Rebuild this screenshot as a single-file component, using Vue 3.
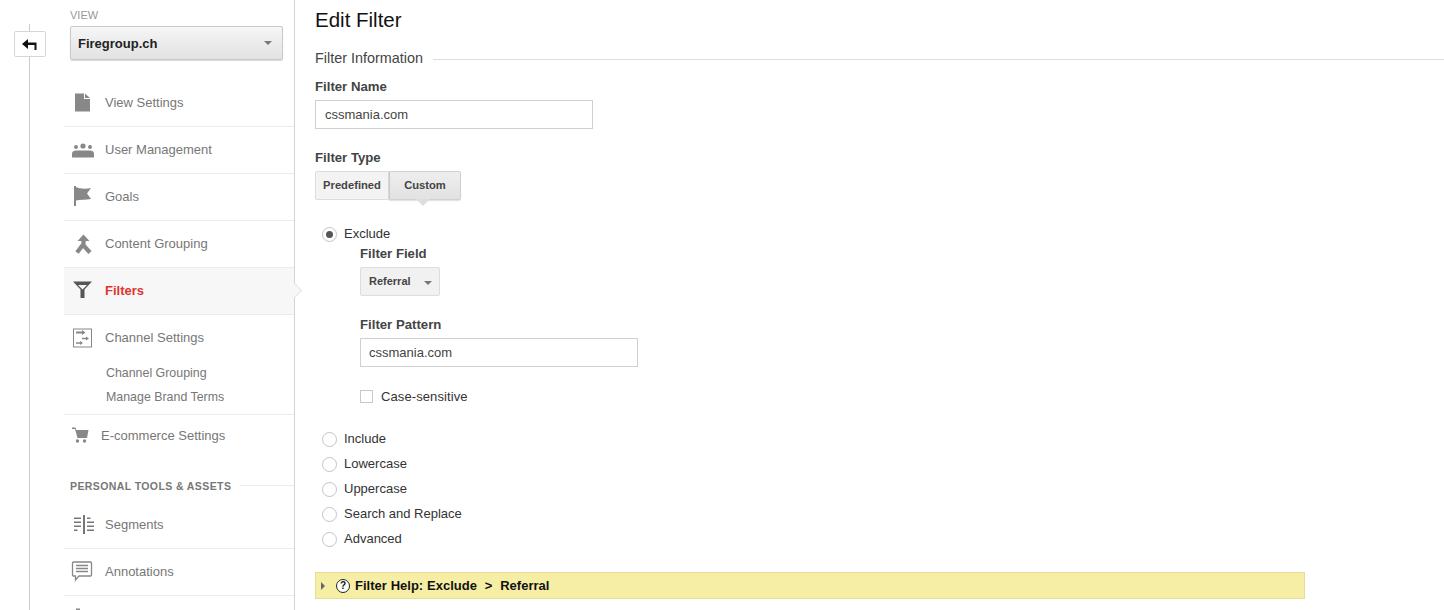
<script setup>
const radios = ['Include', 'Lowercase', 'Uppercase', 'Search and Replace', 'Advanced']
</script>

<template>
  <div class="page">
    <div class="rail">
      <button class="back" type="button" aria-label="Back">
        <svg width="16" height="12" viewBox="0 0 16 12"><path d="M0 6 6 1V4.600H14.500V12H12.500V7H6V11z" fill="#111"/></svg>
      </button>
    </div>

    <aside class="side">
      <div class="view-label">VIEW</div>
      <div class="view-select">
        <span>Firegroup.ch</span>
        <i class="caret"></i>
      </div>

      <nav class="nav">
        <a class="item">
          <svg class="ico" viewBox="0 0 30 24"><path d="M7 3.500h9v5.500h6v12.500H7zM17 3.500l5 4.500h-5z" fill="#888"/></svg>
          <span>View Settings</span>
        </a>
        <a class="item">
          <svg class="ico" viewBox="0 0 30 24" fill="#888"><circle cx="8" cy="10" r="2"/><circle cx="15" cy="9" r="2.600"/><circle cx="22" cy="10" r="2"/><path d="M4 20.500v-4c0-2 2-3 4-3h14c2 0 4 1 4 3v4z"/></svg>
          <span>User Management</span>
        </a>
        <a class="item">
          <svg class="ico" viewBox="0 0 30 24" fill="#888"><path d="M6 2h2v20H6zM8 3c3 1.500 9 2.500 15 1l-4 5.500 4 5.500c-5 1-11 .5-15 1.500z"/></svg>
          <span>Goals</span>
        </a>
        <a class="item">
          <svg class="ico" viewBox="0 0 30 24"><path d="M15.500 3.500 9.500 10h12z" fill="#888"/><path d="M15.500 9v4L9 21.500M16 15l6 6.500" fill="none" stroke="#888" stroke-width="4.200"/></svg>
          <span>Content Grouping</span>
        </a>
        <a class="item active">
          <svg class="ico" viewBox="0 0 30 24"><path d="M5 3.500h19l-7.500 8v8.500h-4v-8.500z" fill="#555"/><path d="M10 7h9l-4.500 4.500z" fill="#f7f7f7"/></svg>
          <span>Filters</span>
          <i class="pointer"></i>
        </a>
        <div class="group">
          <a class="item plain">
            <svg class="ico" viewBox="0 0 30 24"><rect x="5.500" y="3" width="18" height="18" fill="none" stroke="#888"/><path d="M8 5.500h6V4l3.500 2.500L14 9V7.500H8zM14 11.800h4v-1.300l3 2-3 2v-1.300h-4zM8 16.300h4V15l3 2-3 2v-1.300H8z" fill="#888"/></svg>
            <span>Channel Settings</span>
          </a>
          <a class="sub first">Channel Grouping</a>
          <a class="sub">Manage Brand Terms</a>
        </div>
        <a class="item shop">
          <svg class="ico tight" viewBox="0 0 30 24" fill="#888"><path d="M4 4.500h3.500l.8 2.500H20.500l-1.500 8H9.500L7 6H4z"/><circle cx="9.500" cy="18" r="1.700"/><circle cx="16.500" cy="18" r="1.700"/></svg>
          <span>E-commerce Settings</span>
        </a>
      </nav>

      <div class="section">
        <span>PERSONAL TOOLS &amp; ASSETS</span>
        <i></i>
      </div>

      <nav class="nav">
        <a class="item">
          <svg class="ico" viewBox="0 0 30 24" fill="#777"><path d="M15 3h2v19h-2zM6 5.500h7v1.500H6zM6 9.500h7v1.500H6zM6 13.500h7v1.500H6zM6 17.500h3.500v1.500H6zM19 5.500h3.500v1.500H19zM19 9.500h7v1.500h-7zM19 13.500h7v1.500h-7zM19 17.500h7v1.500h-7z"/></svg>
          <span>Segments</span>
        </a>
        <a class="item">
          <svg class="ico" viewBox="0 0 30 24"><path d="M5.500 3h17a1 1 0 0 1 1 1v12a1 1 0 0 1-1 1H11l-3.500 4v-4H5.500a1 1 0 0 1-1-1V4a1 1 0 0 1 1-1z" fill="#fff" stroke="#888" stroke-width="1.300"/><path d="M8 6.500h12M8 9.500h12M8 12.500h12" stroke="#888" stroke-width="1.400"/></svg>
          <span>Annotations</span>
        </a>
        <div class="item last">
          <svg class="ico" viewBox="0 0 30 24"><rect x="8" y="1.500" width="4" height="6" fill="#888"/></svg>
        </div>
      </nav>
    </aside>

    <main class="main">
      <h1>Edit Filter</h1>
      <div class="legend"><span>Filter Information</span><i></i></div>

      <label class="lbl name-lbl">Filter Name</label>
      <div class="input name-input">cssmania.com</div>

      <label class="lbl type-lbl">Filter Type</label>
      <div class="tabs">
        <div class="tab">Predefined</div>
        <div class="tab on">Custom</div>
      </div>

      <div class="options">
        <div class="radio-row">
          <span class="radio checked"></span>
          <span>Exclude</span>
        </div>
        <div class="nested">
          <label class="lbl">Filter Field</label>
          <div class="drop"><span>Referral</span><i class="caret"></i></div>
          <label class="lbl pattern-lbl">Filter Pattern</label>
          <div class="input pattern-input">cssmania.com</div>
          <div class="check-row">
            <span class="check"></span>
            <span>Case-sensitive</span>
          </div>
        </div>
        <div class="radio-list">
          <div v-for="r in radios" :key="r" class="radio-row">
            <span class="radio"></span>
            <span>{{ r }}</span>
          </div>
        </div>
      </div>

      <div class="help">
        <i class="tri"></i>
        <span class="q">?</span>
        <span>Filter Help: Exclude &nbsp;&gt;&nbsp; Referral</span>
      </div>
    </main>
  </div>
</template>

<style>
html, body { margin: 0; background: #fff; overflow: hidden; }
</style>

<style scoped>
.page {
  display: flex;
  width: 1444px;
  height: 610px;
  overflow: hidden;
  font-family: "Liberation Sans", Arial, sans-serif;
  font-size: 13px;
  color: #333;
  background: #fff;
}
.rail {
  position: relative;
  flex: 0 0 64px;
}
.rail::before {
  content: "";
  position: absolute;
  left: 29px;
  top: 24px;
  bottom: 0;
  width: 1px;
  background: #ccc;
}
.back {
  position: relative;
  display: flex;
  align-items: center;
  justify-content: center;
  box-sizing: border-box;
  width: 32px;
  height: 26px;
  margin: 31px 0 0 14px;
  padding: 0;
  background: #fff;
  border: 1px solid #d6d6d6;
  border-radius: 2px;
}
.side {
  flex: 0 0 231px;
  box-sizing: border-box;
  border-right: 1px solid #d4d4d4;
  height: 610px;
}
.view-label {
  padding: 9px 0 0 6px;
  height: 17px;
  font-size: 11px;
  line-height: 13px;
  color: #999;
}
.view-select {
  display: flex;
  align-items: center;
  justify-content: space-between;
  box-sizing: border-box;
  width: 213px;
  height: 34px;
  margin-left: 6px;
  padding: 0 10px 0 7px;
  border: 1px solid #c9c9c9;
  border-radius: 2px;
  background: linear-gradient(#f6f6f6, #e2e2e2);
  box-shadow: 0 1px 1px rgba(0,0,0,.15);
  font-size: 13px;
  font-weight: 700;
  color: #222;
}
.caret {
  width: 0;
  height: 0;
  border-left: 4px solid transparent;
  border-right: 4px solid transparent;
  border-top: 4px solid #777;
}
.nav:first-of-type { margin-top: 20px; }
.item {
  position: relative;
  display: flex;
  align-items: center;
  box-sizing: border-box;
  height: 47px;
  padding-bottom: 2px;
  border-bottom: 1px solid #ececec;
  color: #777;
  font-size: 13px;
}
.ico {
  flex: none;
  width: 30px;
  height: 24px;
  margin: 0 7px 0 4px;
}
.ico.tight { margin-right: 3px; }
.item.active {
  background: #f7f7f7;
  color: #e03530;
  font-weight: 700;
}
.pointer {
  position: absolute;
  right: -6px;
  top: 17px;
  box-sizing: border-box;
  width: 11px;
  height: 11px;
  background: #f7f7f7;
  border-top: 1px solid #e4e4e4;
  border-right: 1px solid #e4e4e4;
  transform: rotate(45deg);
}
.group {
  height: 100px;
  box-sizing: border-box;
  border-bottom: 1px solid #ececec;
}
.item.plain { border-bottom: 0; }
.sub {
  display: block;
  height: 24px;
  line-height: 24px;
  padding-left: 42px;
  font-size: 12.400px;
  color: #777;
}
.sub.first { margin-top: -1px; }
.item.shop {
  height: 42px;
  border-bottom: 0;
}
.section {
  display: flex;
  align-items: center;
  gap: 9px;
  margin-top: 12px;
  height: 33px;
  padding-left: 6px;
  font-size: 10.500px;
  font-weight: 700;
  letter-spacing: .4px;
  color: #777;
}
.section i {
  flex: 1;
  height: 1px;
  background: #ececec;
}
.section + .nav { margin-top: 0; }
.item.last { border: 0; }
.main {
  flex: 1;
  padding-left: 20px;
  color: #333;
}
h1 {
  margin: 0;
  padding-top: 8px;
  height: 24px;
  line-height: 24px;
  font-size: 20.500px;
  font-weight: 400;
  color: #111;
}
.legend {
  display: flex;
  align-items: center;
  gap: 10px;
  margin-top: 16px;
  height: 20px;
  font-size: 14.400px;
  color: #444;
}
.legend i {
  flex: 1;
  height: 1px;
  margin-top: 3px;
  background: #ddd;
}
.lbl {
  display: block;
  font-size: 13.200px;
  font-weight: 700;
  line-height: 16px;
  color: #444;
}
.name-lbl { margin-top: 11px; }
.input {
  box-sizing: border-box;
  height: 29px;
  line-height: 27px;
  padding-left: 9px;
  border: 1px solid #d0d0d0;
  font-size: 13px;
  color: #444;
}
.name-input { width: 278px; margin-top: 5px; }
.type-lbl { margin-top: 21px; }
.tabs {
  display: flex;
  margin-top: 5px;
  width: 146px;
  height: 29px;
}
.tab {
  box-sizing: border-box;
  height: 29px;
  line-height: 27px;
  text-align: center;
  font-size: 11.200px;
  font-weight: 700;
  color: #444;
  border: 1px solid #dcdcdc;
  background: #f3f3f3;
  border-radius: 2px 0 0 2px;
  width: 74px;
}
.tab.on {
  position: relative;
  width: 72px;
  border: 1px solid #d0d0d0;
  border-left-color: #c8c8c8;
  border-radius: 0 2px 2px 0;
  background: linear-gradient(#eee, #e2e2e2);
  box-shadow: 0 1px 1px rgba(0,0,0,.12);
}
.tab.on::after {
  content: "";
  position: absolute;
  left: 26px;
  bottom: -7px;
  width: 0;
  height: 0;
  border-left: 7px solid transparent;
  border-right: 7px solid transparent;
  border-top: 7px solid #dedede;
}
.options { padding-left: 7px; margin-top: 21px; }
.radio-row {
  display: flex;
  align-items: center;
  gap: 7px;
  height: 25px;
  font-size: 13px;
  color: #333;
}
.radio {
  box-sizing: border-box;
  position: relative;
  width: 15px;
  height: 15px;
  margin-top: 1px;
  border: 1px solid #c4c4c4;
  border-radius: 50%;
  background: #fff;
}
.radio.checked::after {
  content: "";
  position: absolute;
  inset: 3px;
  border-radius: 50%;
  background: #555;
}
.nested { padding-left: 38px; }
.drop {
  display: flex;
  align-items: center;
  justify-content: space-between;
  box-sizing: border-box;
  width: 80px;
  height: 29px;
  margin-top: 5px;
  padding: 0 7px 0 8px;
  border: 1px solid #ddd;
  border-radius: 2px;
  background: #f1f1f1;
  font-size: 11px;
  font-weight: 700;
  color: #444;
}
.drop span { margin-top: -2px; }
.drop .caret { margin-top: 2px; }
.pattern-lbl { margin-top: 21px; }
.pattern-input { width: 278px; margin-top: 5px; padding-left: 8px; }
.check-row {
  display: flex;
  align-items: center;
  gap: 8px;
  margin-top: 20px;
  height: 18px;
  font-size: 13px;
  letter-spacing: .1px;
}
.check {
  box-sizing: border-box;
  width: 13px;
  height: 13px;
  border: 1px solid #c8c8c8;
  background: #fff;
}
.radio-list { margin-top: 21px; }
.help {
  display: flex;
  align-items: center;
  box-sizing: border-box;
  width: 990px;
  height: 27px;
  margin-top: 21px;
  padding-left: 5px;
  border: 1px solid #e5dc98;
  background: #f7eea6;
  font-size: 13px;
  font-weight: 700;
  word-spacing: .3px;
  color: #111;
}
.tri {
  width: 0;
  height: 0;
  border-top: 4px solid transparent;
  border-bottom: 4px solid transparent;
  border-left: 4px solid #666;
  margin-right: 11px;
}
.q {
  box-sizing: border-box;
  width: 14px;
  height: 14px;
  margin-right: 5px;
  border: 1px solid #222;
  border-radius: 50%;
  background: #fff;
  font-size: 10px;
  line-height: 12px;
  text-align: center;
}
</style>
